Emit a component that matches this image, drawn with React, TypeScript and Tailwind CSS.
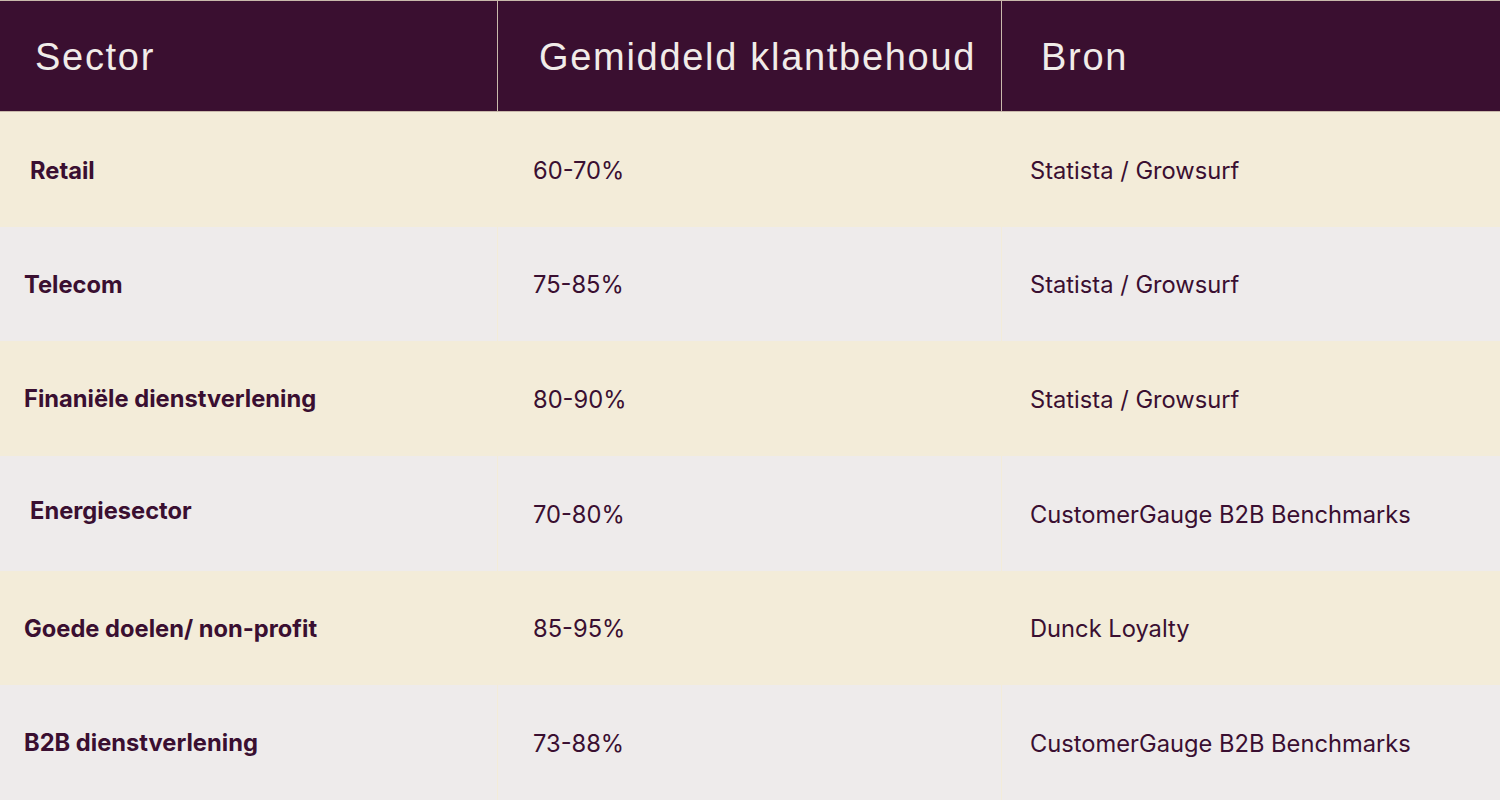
import React from "react";

const rows = [
  { s: "Retail", v: "60-70%", b: "Statista / Growsurf", bg: "bg-[#f3ecd9]", sx: "pl-[30px]", sy: "pt-[2px]" },
  { s: "Telecom", v: "75-85%", b: "Statista / Growsurf", bg: "bg-[#eeebeb]", sx: "pl-[24px]", sy: "pt-[1px]" },
  { s: "Finaniële dienstverlening", v: "80-90%", b: "Statista / Growsurf", bg: "bg-[#f3ecd9]", sx: "pl-[24px]", sy: "pt-[1px]" },
  { s: "Energiesector", v: "70-80%", b: "CustomerGauge B2B Benchmarks", bg: "bg-[#eeebeb]", sx: "pl-[30px]", sy: "pb-[6px]" },
  { s: "Goede doelen/ non-profit", v: "85-95%", b: "Dunck Loyalty", bg: "bg-[#f3ecd9]", sx: "pl-[24px]", sy: "pt-[1px]" },
  { s: "B2B dienstverlening", v: "73-88%", b: "CustomerGauge B2B Benchmarks", bg: "bg-[#eeebeb]", sx: "pl-[24px]", sy: "pt-[1px]" },
];

export default function App() {
  return (
    <div className="w-[1500px] h-[800px] overflow-hidden bg-[#eeebeb]">
      <div
        className="grid grid-cols-[498px_504px_1fr] h-[112px] bg-[#3a0f30] border-t border-b border-[#c9b9ab] text-[#f1ece9] text-[38px] tracking-[1.7px]"
        style={{ fontFamily: '"Liberation Sans", Arial, sans-serif' }}
      >
        <div className="flex items-center pl-[35px] pt-[2px] border-r border-[#c9b9ab]">Sector</div>
        <div className="flex items-center pl-[41px] pt-[2px] border-r border-[#c9b9ab]">Gemiddeld klantbehoud</div>
        <div className="flex items-center pl-[39px] pt-[2px]">Bron</div>
      </div>
      {rows.map((r, i) => (
        <div
          key={i}
          className={`grid grid-cols-[498px_504px_1fr] h-[114.67px] ${r.bg} text-[#3a0f31] text-[23.7px]`}
          style={{ fontFamily: 'Inter, "Noto Sans", sans-serif' }}
        >
          <div className={`flex items-center font-bold ${r.sx} ${r.sy} border-r border-[#f3ecd9]`}>{r.s}</div>
          <div className="flex items-center pl-[35px] pt-[2px] border-r border-[#f3ecd9]">{r.v}</div>
          <div className="flex items-center pl-[28px] pt-[2px]">{r.b}</div>
        </div>
      ))}
    </div>
  );
}
